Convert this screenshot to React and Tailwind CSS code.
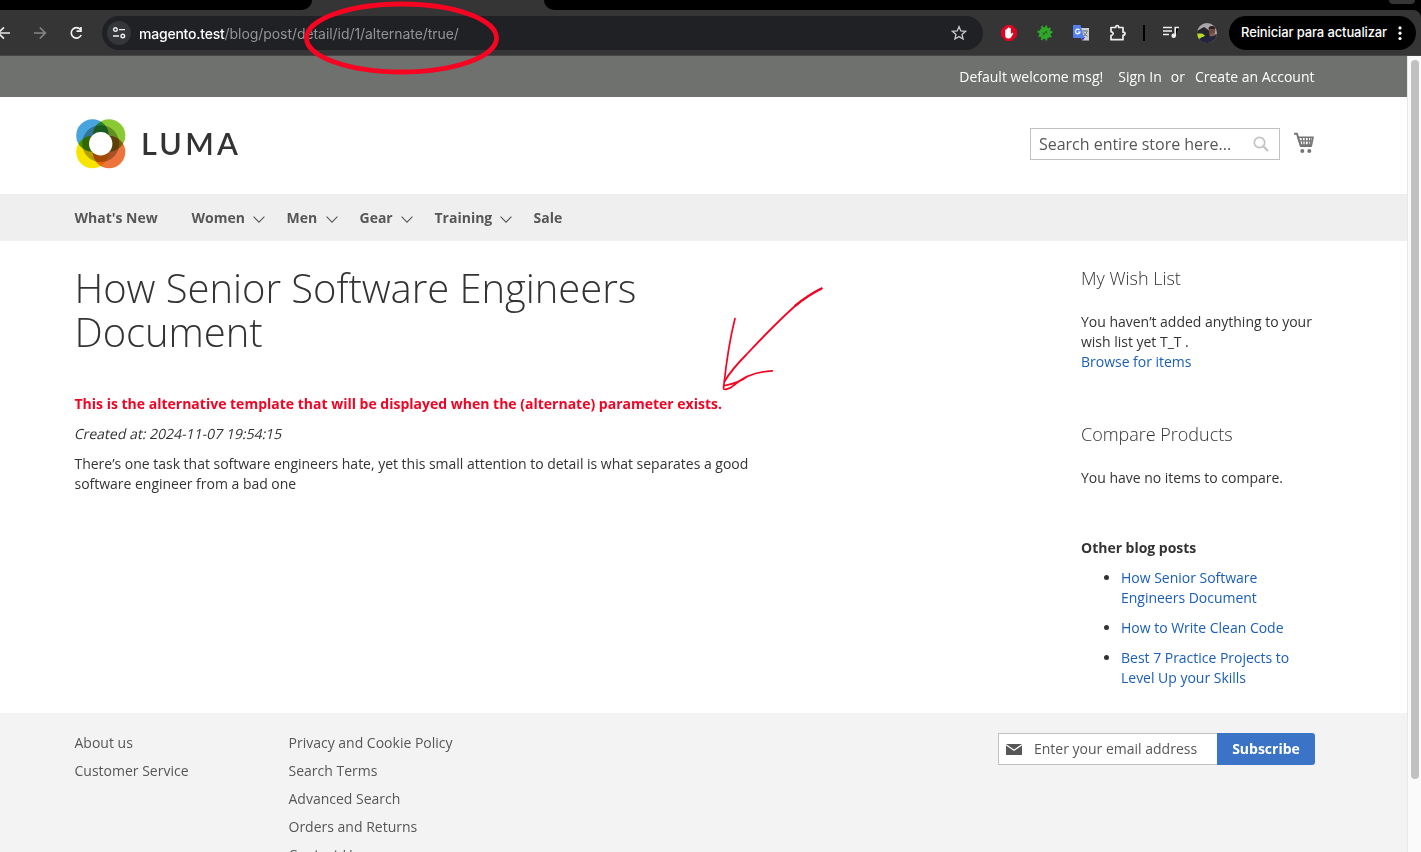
import React from "react";

const Chevron = () => (
  <svg className="mt-1 h-[7px] w-3 shrink-0" viewBox="0 0 12 7" fill="none" stroke="#575757" strokeWidth="1.1">
    <path d="M.6.7 6 6.1 11.4.7" />
  </svg>
);

function BrowserBar() {
  return (
    <div className="relative h-14 shrink-0 bg-black font-[Inter,sans-serif]">
      <div className="flex h-2.5 justify-between bg-[#353535]">
        <div className="w-[312px] rounded-br-[10px] bg-black" />
        <div className="relative flex w-[877px] justify-end rounded-bl-[10px] bg-black pr-1.5">
          <div className="h-1 w-[26px] rounded-b-full bg-[#353535]" />
        </div>
      </div>
      <div className="flex h-[46px] items-center rounded-tr-[8px] border-b border-[#454545] bg-[#353535]">
        <svg className="h-5 w-[102px] shrink-0" viewBox="0 0 102 20" fill="none" strokeWidth="1.7">
          <path d="M10 10H-2M4 4.3-1.7 10 4 15.7" stroke="#e8e8e8" />
          <path d="M34 10h11M39.8 4.5 45.3 10l-5.5 5.5" stroke="#858585" />
          <path d="M80.4 6.5A5.2 5.2 0 1 0 81.2 12M81 4v4.2h-4.5" stroke="#f0f0f0" />
        </svg>
        <div className="flex h-[34px] w-[881px] items-center rounded-full bg-[#202124] pl-[5px] pr-4">
          <div className="flex size-6 items-center justify-center rounded-full bg-[#353639]">
            <svg className="h-3 w-[14px]" viewBox="0 0 14 12" fill="none" stroke="#eee" strokeWidth="1.4">
              <circle cx="3.4" cy="2.6" r="1.8" />
              <path d="M7 2.6h6M1 9h6" />
              <circle cx="10.8" cy="9" r="1.8" />
            </svg>
          </div>
          <div className="ml-2 flex-1 whitespace-nowrap pt-px text-[14px] tracking-[-0.06px] text-[#929498]">
            <span className="font-medium tracking-[-0.22px] text-white">magento.test</span>/blog/post/detail/id/1/alternate/true/
          </div>
          <svg className="h-4 w-4" viewBox="0 0 16 16" fill="none" stroke="#c7c7c7" strokeWidth="1.3">
            <path d="m8 1.6 1.8 4.3 4.8.4-3.6 3.1 1.1 4.6L8 11.6 3.9 14 5 9.400 1.400 6.300l4.800-.4z" />
          </svg>
        </div>
        <svg className="ml-[18px] h-4 w-4" viewBox="0 0 16 16">
          <path d="M5 0h6l5 5v6l-5 5H5l-5-5V5z" fill="#dd0522" />
          <path d="M4.200 7.500V5q.7-.8 1.300 0V3.700q.7-.9 1.400 0V2.800q.8-.9 1.500 0v.7q.8-.8 1.500.1V9l1.500-1.300q1-.2.9.7L10 12.500q-1 1.200-2.500 1.100-3.300 0-3.300-3z" fill="#fff" />
        </svg>
        <svg className="ml-5 h-[18px] w-4" viewBox="0 0 16 18">
          <circle cx="8" cy="9" r="5.9" fill="#31a829" />
          <path d="M8 9 4.600 2M8 9l1.500-7.500M8 9l5.500-5M8 9l7.500-1M8 9l6.500 4M8 9l1.500 7.500M8 9l-3.500 7M8 9l-6.500 3.500M8 9 .5 7.500" stroke="#31a829" strokeWidth="1.8" />
          <path d="m6 11.500 4-5M5.700 8l1.500 2.700M8.700 7l1.500 2.700" stroke="#24651f" strokeWidth="1" />
        </svg>
        <svg className="ml-5 h-4 w-4" viewBox="0 0 16 16">
          <path d="M6 3h10v12.500H9z" fill="#ccd0d3" />
          <path d="M9 6h6M12 5v1M14 6.500q-1 3.500-4 5M10.500 7.500q1 2.500 4 3.800" stroke="#64777d" fill="none" />
          <path d="M8.500 12H12l-2.500 4z" fill="#3730d3" />
          <path d="M0 0h7.500L11 13H1q-1 0-1-1z" fill="#557fed" />
          <path d="M6.500 5A2.300 2.300 0 1 0 7 7H4.800" stroke="#fff" strokeWidth="1.200" fill="none" />
        </svg>
        <svg className="ml-5 h-[18px] w-[18px]" viewBox="0 0 18 18" fill="none" stroke="#eee" strokeWidth="1.700">
          <path d="M2 3.500h4.700q0-2 1.500-2t1.500 2H14v4.700q2 0 2 1.500t-2 1.500v4.500H2v-4.200q2.200-.5 2.200-1.900T2 7.700z" strokeLinejoin="round" />
        </svg>
        <div className="ml-4 h-4 w-[2px] bg-black" />
        <svg className="ml-[18px] h-4 w-4" viewBox="0 0 16 16">
          <path d="M0 2.500h9M0 6h9M0 9.500h6M12.200 11V2.500H16" stroke="#eee" strokeWidth="1.600" />
          <circle cx="10.700" cy="10.800" r="2.300" fill="#eee" />
        </svg>
        <svg className="ml-[18px] h-5 w-5 rounded-full" viewBox="0 0 20 20">
          <rect width="20" height="20" fill="#aaa5a7" />
          <path d="M0 8 7 4l6 4v12H0z" fill="#24262b" />
          <path d="M0 10.500h5l3 2-3 4H1z" fill="#b9dd24" />
          <path d="M2 16q5-4 9-2l9-3v9H3z" fill="#24243d" />
          <ellipse cx="15" cy="7.500" rx="3.200" ry="4.400" fill="#6e4941" />
          <path d="M11.500 6q0-3 3.500-3t3.500 3z" fill="#302323" />
          <path d="m12 11 5-1 1.500 2.500-5 1z" fill="#865d50" />
        </svg>
        <div className="ml-3 flex h-[34px] w-[187px] items-center rounded-full bg-black pl-3 text-[13px] font-medium tracking-[-0.12px] text-white">
          <span className="w-[157px] whitespace-nowrap pt-px">Reiniciar para actualizar</span>
          <svg className="h-4 w-1" viewBox="0 0 4 16" fill="#fff">
            <circle cx="2" cy="2.900" r="1.600" /><circle cx="2" cy="8.200" r="1.600" /><circle cx="2" cy="13.500" r="1.600" />
          </svg>
        </div>
      </div>
    </div>
  );
}

function Logo() {
  return (
    <div className="flex items-center">
      <svg className="h-[50px] w-[50px]" viewBox="0 0 50 50">
        <g className="isolate">
          <circle className="mix-blend-multiply" cx="16.500" cy="16.500" r="16.300" fill="#47a4df" />
          <circle className="mix-blend-multiply" cx="33" cy="16.500" r="16.300" fill="#8bc934" />
          <circle className="mix-blend-multiply" cx="16.500" cy="33" r="16.300" fill="#f9e400" />
          <circle className="mix-blend-multiply" cx="33" cy="33" r="16.300" fill="#ed743c" />
          <circle className="mix-blend-multiply" cx="24.700" cy="24.700" r="18.500" fill="#b4b4aa" />
          <circle cx="24.700" cy="24.700" r="11.700" fill="#fff" />
        </g>
      </svg>
      <span className="-mt-0.5 ml-[15px] font-[Lato,sans-serif] text-[30.500px] font-semibold leading-[50px] tracking-[3.300px] text-[#333]">LUMA</span>
    </div>
  );
}

const navItems = [
  { label: "What's New", width: "w-[117px]" },
  { label: "Women", width: "w-[95px]", menu: true },
  { label: "Men", width: "w-[73px]", menu: true },
  { label: "Gear", width: "w-[75px]", menu: true },
  { label: "Training", width: "w-[99px]", menu: true },
  { label: "Sale", width: "w-[40px]" },
];

function StoreHeader() {
  return (
    <header>
      <div className="flex h-[41px] items-center justify-end bg-[#6e716e] pr-[92.500px] text-white">
        <span>Default welcome msg!</span>
        <a className="ml-[15px]">Sign In</a>
        <span className="ml-[9px]">or</span>
        <a className="ml-[10px]">Create an Account</a>
      </div>
      <div className="flex h-[97px] items-center justify-between pb-[3px] pl-[76px] pr-[92px]">
        <Logo />
        <div className="flex items-center">
          <div className="flex h-8 w-[250px] items-center justify-between border border-[#c2c2c2] pl-2 pr-2.5 text-base tracking-[-0.02px] text-[#575757]">
            <span>Search entire store here...</span>
            <svg className="h-4 w-4" viewBox="0 0 16 16" fill="none" stroke="#c2c2c2">
              <circle cx="6.500" cy="6.500" r="5.200" strokeWidth="1.700" /><path d="m10.500 10.500 4.500 4.500" strokeWidth="2.100" />
            </svg>
          </div>
          <svg className="-mt-0.5 ml-[13px] h-[22px] w-[22px]" viewBox="0 0 22 22" fill="none" stroke="#757575">
            <path d="M1 1.700h3L7.800 14h11" strokeWidth="1.900" />
            <path d="M5 5.200h15L18.500 13H7.500z" strokeWidth="1.600" />
            <path d="M6 8.800h13.500M9 5l1 8M12.300 5v8M15.300 5v8M18 5l-1 8" strokeWidth="1.300" />
            <circle cx="9.300" cy="19" r="2" fill="#757575" stroke="none" /><circle cx="16.300" cy="19" r="2" fill="#757575" stroke="none" />
          </svg>
        </div>
      </div>
      <nav className="flex h-[47px] items-center bg-[#efefef] pl-[74.500px] font-bold text-[#575757]">
        {navItems.map((item) => (
          <a key={item.label} className={`flex shrink-0 items-center whitespace-nowrap ${item.width} ${item.menu ? "justify-between pr-[22px]" : ""}`}>
            {item.label}
            {item.menu && <Chevron />}
          </a>
        ))}
      </nav>
    </header>
  );
}

function Main() {
  return (
    <main className="flex h-[472px] shrink-0 justify-between pl-[74.500px] pr-[92px] text-[#333]">
      <article className="w-[700px] pt-[25px]">
        <h1 className="text-[40px] font-light leading-[44px] tracking-[-0.055px]">How Senior Software Engineers Document</h1>
        <p className="mt-10 font-bold text-[#f00524]">This is the alternative template that will be displayed when the (alternate) parameter exists.</p>
        <p className="mt-2.5 w-fit -skew-x-12">Created at: 2024-11-07 19:54:15</p>
        <p className="mt-2.5 tracking-[-0.015px]">There’s one task that software engineers hate, yet this small attention to detail is what separates a good software engineer from a bad one</p>
      </article>
      <aside className="w-[234px] pt-[27px] tracking-[-0.015px]">
        <h2 className="text-[18px] font-light leading-5">My Wish List</h2>
        <p className="mt-[24px]">You haven’t added anything to your wish list yet T_T .</p>
        <a className="block text-[#1a5eb8]">Browse for items</a>
        <h2 className="mt-[52px] text-[18px] font-light leading-5">Compare Products</h2>
        <p className="mt-[24px]">You have no items to compare.</p>
        <h3 className="mt-[50px] font-bold">Other blog posts</h3>
        <ul className="mt-2.5 list-disc space-y-2.5 pl-10 marker:text-[#333]">
          <li><a className="text-[#1a5eb8]">How Senior Software Engineers Document</a></li>
          <li><a className="text-[#1a5eb8]">How to Write Clean Code</a></li>
          <li><a className="text-[#1a5eb8]">Best 7 Practice Projects to Level Up your Skills</a></li>
        </ul>
      </aside>
    </main>
  );
}

function Footer() {
  return (
    <footer className="flex min-h-0 flex-1 items-start bg-[#f3f3f3] pl-[74.500px] pr-[92px] pt-5 text-[#575757]">
      <div className="flex w-[214px] flex-col gap-2"><a>About us</a><a>Customer Service</a></div>
      <div className="flex flex-col gap-2">
        <a>Privacy and Cookie Policy</a><a>Search Terms</a><a>Advanced Search</a><a>Orders and Returns</a><a>Contact Us</a>
      </div>
      <div className="ml-auto flex h-8">
        <div className="flex w-[219px] items-center border border-r-0 border-[#c2c2c2] bg-white pl-[7px]">
          <svg className="h-[11px] w-4" viewBox="0 0 16 11"><rect width="16" height="11" rx=".6" fill="#575757" /><path d="m0 .8 8 5.400 8-5.400" fill="none" stroke="#fff" strokeWidth="1.300" /></svg>
          <span className="ml-3">Enter your email address</span>
        </div>
        <div className="flex w-[98px] items-center justify-center rounded-r-[3px] bg-[#3b73c6] font-bold text-white">Subscribe</div>
      </div>
    </footer>
  );
}

export default function App() {
  return (
    <div className="relative flex h-[852px] w-[1421px] flex-col overflow-hidden bg-white">
      <BrowserBar />
      <div className="flex h-[796px]">
        <div className="flex w-[1407px] shrink-0 flex-col overflow-hidden font-['Open_Sans',sans-serif] text-[14px] leading-5">
          <StoreHeader />
          <Main />
          <Footer />
        </div>
        <div className="w-[14px] border-l border-[#e7e7e7] bg-[#fafafa] pl-[3px] pt-1">
          <div className="h-[719px] w-2 rounded-full bg-[#c1c1c1]" />
        </div>
      </div>
      <svg className="pointer-events-none absolute inset-0 h-full w-full" viewBox="0 0 1421 852" fill="none" stroke="#f50522" strokeLinecap="round">
        <ellipse cx="401.500" cy="38" rx="95" ry="34" strokeWidth="4.800" />
        <path d="M821.500 288.500q-14 7-27 18-22 20-48 48-15 15-22 27" strokeWidth="1.800" />
        <path d="M821.500 288.500q-14 7-26 17" strokeWidth="2.300" />
        <path d="M735 318.500Q728 346 723.800 386q-1 4 2 3.400 4-.4 8-4 15-13.500 38.500-14.500M725 385.500q15-3 22-9" strokeWidth="1.700" />
      </svg>
    </div>
  );
}
